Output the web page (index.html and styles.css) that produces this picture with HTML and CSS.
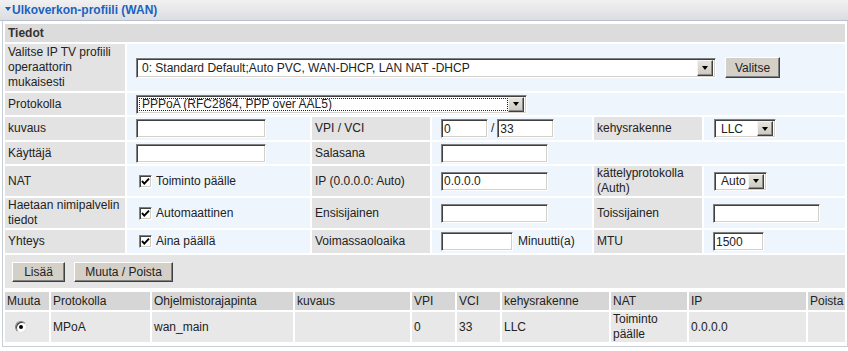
FILE: index.html
```html
<!DOCTYPE html>
<html lang="fi">
<head>
<meta charset="utf-8">
<title>Ulkoverkon-profiili (WAN)</title>
<link rel="stylesheet" href="styles.css">
</head>
<body>
<div class="titlebar"><span class="tri"></span><span class="title">Ulkoverkon-profiili (WAN)</span></div>
<div class="panel">
  <table class="form">
    <colgroup><col class="c1"><col class="c2"><col class="c3"><col class="c4"><col class="c5"><col class="c6"></colgroup>
    <tr class="r-sect"><th colspan="6" class="sect">Tiedot</th></tr>
    <tr class="r-profile">
      <td class="lbl">Valitse IP TV profiili operaattorin mukaisesti</td>
      <td class="val" colspan="5">
        <span class="dd dd-profile"><span class="dd-val">0: Standard Default;Auto PVC, WAN-DHCP, LAN NAT -DHCP</span><span class="dd-btn"><span class="arrow"></span></span></span><button class="btn btn-valitse">Valitse</button>
      </td>
    </tr>
    <tr class="r-proto">
      <td class="lbl">Protokolla</td>
      <td class="val" colspan="5">
        <span class="dd dd-proto"><span class="dd-val focus">PPPoA (RFC2864, PPP over AAL5)</span><span class="dd-btn"><span class="arrow"></span></span></span>
      </td>
    </tr>
    <tr class="r-in">
      <td class="lbl">kuvaus</td>
      <td class="val"><input class="tx in-desc" type="text" value=""></td>
      <td class="lbl">VPI / VCI</td>
      <td class="val"><input class="tx in-vpi" type="text" value="0"><span class="slash">/</span><input class="tx in-vci" type="text" value="33"></td>
      <td class="lbl">kehysrakenne</td>
      <td class="val"><span class="dd dd-llc"><span class="dd-val">LLC</span><span class="dd-btn"><span class="arrow"></span></span></span></td>
    </tr>
    <tr class="r-in2">
      <td class="lbl">Käyttäjä</td>
      <td class="val"><input class="tx in-desc" type="text" value=""></td>
      <td class="lbl">Salasana</td>
      <td class="val" colspan="3"><input class="tx in-ip" type="password" value=""></td>
    </tr>
    <tr class="r-two">
      <td class="lbl">NAT</td>
      <td class="val"><span class="cb"><svg viewBox="0 0 11 11" width="11" height="11"><polyline points="2,5 4.3,7.6 9,2.6" fill="none" stroke="#000" stroke-width="1.9"/></svg></span><span class="cbl">Toiminto päälle</span></td>
      <td class="lbl">IP (0.0.0.0: Auto)</td>
      <td class="val"><input class="tx in-ip" type="text" value="0.0.0.0"></td>
      <td class="lbl">kättelyprotokolla (Auth)</td>
      <td class="val"><span class="dd dd-auth"><span class="dd-val">Auto</span><span class="dd-btn"><span class="arrow"></span></span></span></td>
    </tr>
    <tr class="r-two">
      <td class="lbl">Haetaan nimipalvelin<br>tiedot</td>
      <td class="val"><span class="cb"><svg viewBox="0 0 11 11" width="11" height="11"><polyline points="2,5 4.3,7.6 9,2.6" fill="none" stroke="#000" stroke-width="1.9"/></svg></span><span class="cbl">Automaattinen</span></td>
      <td class="lbl">Ensisijainen</td>
      <td class="val"><input class="tx in-ip" type="text" value=""></td>
      <td class="lbl">Toissijainen</td>
      <td class="val"><input class="tx in-ip" type="text" value=""></td>
    </tr>
    <tr class="r-in">
      <td class="lbl">Yhteys</td>
      <td class="val"><span class="cb"><svg viewBox="0 0 11 11" width="11" height="11"><polyline points="2,5 4.3,7.6 9,2.6" fill="none" stroke="#000" stroke-width="1.9"/></svg></span><span class="cbl">Aina päällä</span></td>
      <td class="lbl">Voimassaoloaika</td>
      <td class="val"><input class="tx in-time" type="text" value=""><span class="unit">Minuutti(a)</span></td>
      <td class="lbl">MTU</td>
      <td class="val"><input class="tx in-mtu" type="text" value="1500"></td>
    </tr>
    <tr class="r-btns">
      <td colspan="6" class="btnrow"><button class="btn btn-add">Lisää</button><button class="btn btn-edit">Muuta / Poista</button></td>
    </tr>
  </table>
  <table class="list">
    <colgroup><col class="k1"><col class="k2"><col class="k3"><col class="k4"><col class="k5"><col class="k6"><col class="k7"><col class="k8"><col class="k9"><col class="k10"></colgroup>
    <tr>
      <th>Muuta</th><th>Protokolla</th><th>Ohjelmistorajapinta</th><th>kuvaus</th><th>VPI</th><th>VCI</th><th>kehysrakenne</th><th>NAT</th><th>IP</th><th>Poista</th>
    </tr>
    <tr>
      <td><span class="radio"><span class="dot"></span></span></td>
      <td>MPoA</td>
      <td>wan_main</td>
      <td></td>
      <td>0</td>
      <td>33</td>
      <td>LLC</td>
      <td>Toiminto päälle</td>
      <td>0.0.0.0</td>
      <td></td>
    </tr>
  </table>
</div>
</body>
</html>
```

FILE: styles.css
```css
* { box-sizing: border-box; }

body {
  margin: 0;
  background: #fff;
  font-family: "Liberation Sans", Arial, sans-serif;
  font-size: 12px;
  color: #222;
}

.titlebar {
  height: 21px;
  background: linear-gradient(#f1f1f1, #dcdde0);
  border-bottom: 1px solid #b7c2ce;
  display: flex;
  align-items: center;
  padding-left: 5px;
}

.tri {
  width: 0;
  height: 0;
  border-left: 3px solid transparent;
  border-right: 3px solid transparent;
  border-top: 4px solid #1a62c0;
  margin-right: 1px;
  margin-top: -3px;
}

.title {
  color: #1a62c0;
  font-weight: bold;
  line-height: 15px;
}

.panel {
  margin-left: 2px;
  width: 846px;
  border: 1px solid #c8ced6;
  border-top: none;
  padding: 1px 0 2px 0;
}

table {
  width: 100%;
  table-layout: fixed;
  border-spacing: 2px;
}

.form .c1 { width: 120px; }
.form .c2 { width: 183px; }
.form .c3 { width: 118px; }
.form .c4 { width: 160px; }
.form .c5 { width: 108px; }

.form td, .form th {
  line-height: 15px;
  vertical-align: middle;
  padding: 0 3px;
  white-space: normal;
}

.sect {
  background: #dcdcdc;
  text-align: left;
  font-weight: bold;
  color: #333;
  height: 18px;
}

.lbl { background: #e3e3e3; }
.val { background: #eef5fd; padding-left: 9px !important; }

.r-profile td { height: 47px; }
.r-proto td { height: 22px; }
.r-in td { height: 23px; }
.r-in2 td { height: 22px; }
.r-two td { height: 30px; }

.dd {
  display: inline-flex;
  vertical-align: middle;
  height: 20px;
  background: #fff;
  border: 1px solid;
  border-color: #808080 #fff #fff #808080;
  box-shadow: inset 1px 1px 0 #404040, inset -1px -1px 0 #d4d0c8;
  padding: 2px 2px 2px 2px;
}

.dd-val {
  flex: 1;
  display: flex;
  align-items: center;
  padding-left: 2px;
  line-height: 14px;
  white-space: nowrap;
  overflow: hidden;
  border: 1px solid transparent;
}

.dd-val.focus { border: 1px dotted #222; }

.dd-btn {
  width: 16px;
  margin: -1px 0;
  background: linear-gradient(#e6e4de, #cdc9c0);
  border: 1px solid;
  border-color: #f4f4f4 #404040 #404040 #f4f4f4;
  box-shadow: inset -1px -1px 0 #8a8a8a;
  display: flex;
  align-items: center;
  justify-content: center;
}

.arrow {
  width: 0;
  height: 0;
  border-left: 3.5px solid transparent;
  border-right: 3.5px solid transparent;
  border-top: 4px solid #000;
}

.dd-profile { width: 580px; }
.dd-proto { width: 391px; height: 19px; }
.dd-llc { width: 62px; height: 19px; margin-left: 1px; }
.dd-auth { width: 53px; height: 19px; margin-left: 1px; }

.dd-llc .dd-val, .dd-auth .dd-val { padding-left: 3px; }

.btn {
  font-family: "Liberation Sans", Arial, sans-serif;
  font-size: 12px;
  color: #222;
  background: #d4d0c8;
  border: 1px solid;
  border-color: #fff #404040 #404040 #fff;
  box-shadow: inset -1px -1px 0 #808080;
  height: 21px;
  padding: 0;
  vertical-align: middle;
}

.btn-valitse { width: 55px; margin-left: 9px; }
.btn-add { width: 53px; height: 20px; }
.btn-edit { width: 99px; height: 20px; margin-left: 9px; }

.tx {
  font-family: "Liberation Sans", Arial, sans-serif;
  font-size: 12px;
  color: #222;
  height: 19px;
  padding: 1px 2px;
  background: #fff;
  border: 1px solid;
  border-color: #808080 #fff #fff #808080;
  box-shadow: inset 1px 1px 0 #404040, inset -1px -1px 0 #d4d0c8;
  vertical-align: middle;
  margin: 0;
}

.in-desc { width: 130px; }
.in-vpi { width: 47px; }
.in-vci { width: 57px; }
.in-ip { width: 107px; }
.in-time { width: 72px; }
.in-mtu { width: 51px; }

.slash { display: inline-block; margin: 0 3px 0 3px; vertical-align: middle; }
.unit { margin-left: 5px; vertical-align: middle; }

.cb {
  display: inline-flex;
  align-items: center;
  justify-content: center;
  width: 13px;
  height: 13px;
  margin-left: 3px;
  background: #fff;
  border: 1px solid;
  border-color: #808080 #fff #fff #808080;
  box-shadow: inset 1px 1px 0 #404040, inset -1px -1px 0 #d4d0c8;
  vertical-align: middle;
}

.cbl { margin-left: 4px; vertical-align: middle; }

.btnrow {
  background: #e5e5e5;
  height: 33px;
  padding: 0 0 0 7px !important;
}

.list .k1 { width: 44px; }
.list .k2 { width: 99px; }
.list .k3 { width: 141px; }
.list .k4 { width: 115px; }
.list .k5 { width: 43px; }
.list .k6 { width: 43px; }
.list .k7 { width: 107px; }
.list .k8 { width: 76px; }
.list .k9 { width: 117px; }

.list th {
  background: #d6d6d6;
  font-weight: normal;
  text-align: left;
  padding: 0 2px;
  height: 18px;
  line-height: 15px;
  white-space: nowrap;
  overflow: hidden;
}

.list td {
  background: #e8e8e8;
  padding: 0 2px;
  height: 30px;
  line-height: 15px;
  vertical-align: middle;
}

.radio {
  display: flex;
  align-items: center;
  justify-content: center;
  width: 12px;
  height: 12px;
  margin-left: 8px;
  border-radius: 50%;
  background: #fff;
  border: 1px solid;
  border-color: #808080 #e0e0e0 #e0e0e0 #808080;
  box-shadow: inset 1px 1px 0 #404040;
}

.dot {
  width: 4px;
  height: 4px;
  border-radius: 50%;
  background: #000;
}
```
